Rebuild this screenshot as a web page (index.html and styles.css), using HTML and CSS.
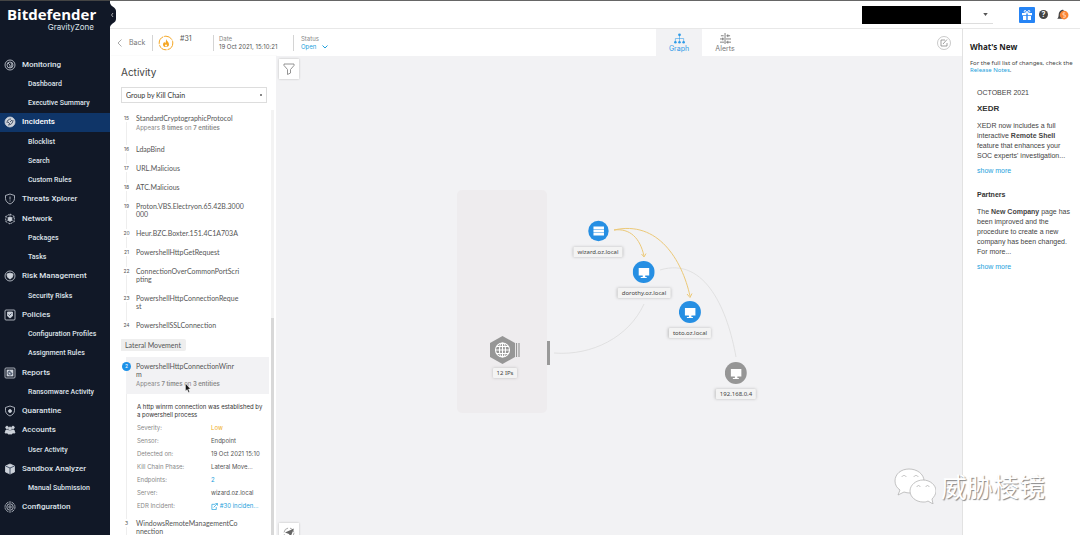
FILE: index.html
```html
<!DOCTYPE html>
<html lang="en">
<head>
<meta charset="utf-8">
<title>Bitdefender GravityZone</title>
<link rel="stylesheet" href="styles.css">
</head>
<body>
<div class="app">
  <aside class="sidebar">
    <div class="brand"><span class="brand-name">Bitdefender</span><span class="brand-sub">GravityZone</span></div>
    <nav class="nav">
      <a href="#" class="top"><svg viewBox="0 0 12 12"><circle cx="6" cy="6" r="5"/><circle cx="6" cy="6" r="3"/><path d="M4 4l2 2v3M7 4l1 2-1 2"/></svg>Monitoring</a>
      <a href="#">Dashboard</a>
      <a href="#">Executive Summary</a>
      <a href="#" class="top active"><svg viewBox="0 0 12 12"><circle cx="6" cy="6" r="5" class="fill"/><path class="dark" d="M3 7c0-3 2-4 4-4M4 9c3 0 5-2 5-5M6 6l2-2M4 6l2 2"/></svg>Incidents</a>
      <a href="#">Blocklist</a>
      <a href="#">Search</a>
      <a href="#">Custom Rules</a>
      <a href="#" class="top"><svg viewBox="0 0 12 12"><path d="M6 1l4.500 1.500v3C10.500 8 8.500 10 6 11 3.500 10 1.500 8 1.500 5.500v-3zM6 3.500v3M6 7.500v1"/></svg>Threats Xplorer</a>
      <a href="#" class="top"><svg viewBox="0 0 12 12"><path d="M6 1v10M1.700 3.500l8.600 5M10.300 3.500l-8.600 5M6 1l4.300 2.500v5L6 11 1.700 8.500v-5z" stroke-dasharray="2 1"/><circle cx="6" cy="6" r="2" class="fill"/></svg>Network</a>
      <a href="#">Packages</a>
      <a href="#">Tasks</a>
      <a href="#" class="top"><svg viewBox="0 0 12 12"><circle cx="6" cy="6" r="5"/><path class="fill" d="M3 4l3-1 3 1c0 3-1 4-3 5-2-1-3-2-3-5z"/></svg>Risk Management</a>
      <a href="#">Security Risks</a>
      <a href="#" class="top"><svg viewBox="0 0 12 12"><rect x="1" y="1" width="10" height="10" rx="1"/><path class="fill" d="M3.500 3h5v4l-2.500 2-2.500-2z"/><path class="dark" d="M4.500 5.500l1 1 2-2"/></svg>Policies</a>
      <a href="#">Configuration Profiles</a>
      <a href="#">Assignment Rules</a>
      <a href="#" class="top"><svg viewBox="0 0 12 12"><rect x="1" y="1" width="10" height="10" rx="1"/><rect x="3" y="3" width="6" height="6" class="fill"/><path class="dark" d="M6 4v2h2A2 2 0 1 1 6 4"/></svg>Reports</a>
      <a href="#">Ransomware Activity</a>
      <a href="#" class="top"><svg viewBox="0 0 12 12"><path d="M6 1l4.500 1.500v3C10.500 8 8.500 10 6 11 3.500 10 1.500 8 1.500 5.500v-3z"/><circle cx="6" cy="6" r="1.500" class="fill"/></svg>Quarantine</a>
      <a href="#" class="top"><svg viewBox="0 0 12 12"><g class="fill"><circle cx="3" cy="3.500" r="1.300"/><circle cx="9" cy="3.500" r="1.300"/><circle cx="6" cy="4.500" r="1.500"/><path d="M1 9l1-3h2l2 1 2-1h2l1 3H8v1H4V9z"/></g></svg>Accounts</a>
      <a href="#">User Activity</a>
      <a href="#" class="top"><svg viewBox="0 0 12 12"><path class="fill" d="M6 1l4.500 2v6L6 11 1.500 9V3z"/><path class="dark" d="M1.500 3L6 5l4.500-2M6 5v6"/></svg>Sandbox Analyzer</a>
      <a href="#">Manual Submission</a>
      <a href="#" class="top"><svg viewBox="0 0 12 12"><circle cx="6" cy="6" r="5" stroke-dasharray="2.500 .6"/><circle cx="6" cy="6" r="3.200"/><circle cx="6" cy="6" r="1.200"/></svg>Configuration</a>
    </nav>
    <button class="collapse" aria-label="Collapse menu"><svg viewBox="0 0 6 24"><path d="M0 0c1 4 6 4 6 8v8c0 4-5 4-6 8z" fill="#111827"/><path d="M3 10L1.500 12 3 14" fill="none" stroke="#ccc" stroke-width=".8"/></svg></button>
  </aside>

  <div class="main">
    <header class="topbar">
      <span class="redacted"></span>
      <button class="account" aria-label="Account menu"><svg viewBox="0 0 6 4"><path d="M0 0h6L3 4z" fill="#555"/></svg></button>
      <button class="gift" aria-label="What's new"><svg viewBox="0 0 12 12"><path fill="#fff" d="M1 4h4.300v2.300H1zM6.700 4H11v2.300H6.700zM2 7h3.300v4H2zM6.700 7H10v4H6.700z"/><path fill="none" stroke="#fff" d="M6 4C3 4 2.500 1.500 4 1.500S6 4 6 4s.5-2.500 2-2.500S9 4 6 4z"/></svg></button>
      <button class="help" aria-label="Help">?</button>
      <button class="bell" aria-label="Notifications"><svg viewBox="0 0 12 12"><path fill="#444" d="M1 10c2-1 1-4 2-6 1-2 3-3 4-2l1 8z"/><circle cx="7.500" cy="6.500" r="4" fill="#fb8532"/><path d="M8.500 4.500h-2v2h2v2h-2" fill="none" stroke="#fff" stroke-width=".6"/></svg></button>
    </header>

    <div class="workspace">
      <div class="incident">
        <div class="toolbar">
          <button class="back"><svg viewBox="0 0 5 8"><path d="M4.500 .5L1 4l3.500 3.500" fill="none" stroke="#aaa"/></svg>Back</button>
          <div class="cell ident"><svg viewBox="0 0 16 16"><circle cx="8" cy="8" r="6.800" fill="none" stroke="#f5a623" stroke-dasharray="9 1"/><path fill="#f5a623" d="M8 4c.5 2 3 3 3 5.300C11 11 10 12 8 12s-3-1-3-2.600C5 8 6 8 6 7c1 .3 1 1 1 1.500C8 7 8 6 8 4z"/><circle cx="8" cy="10.500" r="1" fill="#fff"/></svg><span>#31</span></div>
          <div class="cell date"><span class="muted">Date</span><span>19 Oct 2021, 15:10:21</span></div>
          <div class="cell status"><span class="muted">Status</span><button class="open">Open <svg viewBox="0 0 6 4"><path d="M.5 .5L3 3 5.500 .5" fill="none" stroke="#1d9fdc"/></svg></button></div>
          <div class="tabs">
            <button class="tab on"><svg viewBox="0 0 12 12"><g fill="#2d9be8"><circle cx="6" cy="2" r="1.500"/><circle cx="1.500" cy="10" r="1.400"/><circle cx="6" cy="10" r="1.400"/><circle cx="10.500" cy="10" r="1.400"/></g><path d="M6 2v8M1.500 10V6h9v4" fill="none" stroke="#2d9be8" stroke-width=".6"/></svg>Graph</button>
            <button class="tab"><svg viewBox="0 0 12 12"><path d="M5.500 0v12M1 3h3M7 3h4M0 6.500h4.500M6.500 6.500H12M0 10h4.500M6.500 10H12M8.500 1.500v3M3 5v3M8.500 8.500v3" fill="none" stroke="#777"/></svg>Alerts</button>
          </div>
          <button class="edit" aria-label="Notes"><svg viewBox="0 0 14 14"><circle cx="7" cy="7" r="6.500" fill="none" stroke="#bbb" stroke-width=".8"/><path d="M8 4H4v6h6V7M6 8l4-4.500" fill="none" stroke="#888" stroke-width=".8"/></svg></button>
        </div>

        <div class="body">
          <section class="activity">
            <h2>Activity</h2>
            <select aria-label="Group by"><option>Group by Kill Chain</option></select>
            <div class="scroller">
              <ol class="list">
                <li><i>15</i><div>StandardCryptographicProtocol<p class="sub">Appears <b>8 times</b> on <b>7 entities</b></p></div></li>
                <li><i>16</i><div>LdapBind</div></li>
                <li><i>17</i><div>URL.Malicious</div></li>
                <li><i>18</i><div>ATC.Malicious</div></li>
                <li><i>19</i><div>Proton.VBS.Electryon.65.42B.3000<br>000</div></li>
                <li><i>20</i><div>Heur.BZC.Boxter.151.4C1A703A</div></li>
                <li><i>21</i><div>PowershellHttpGetRequest</div></li>
                <li><i>22</i><div>ConnectionOverCommonPortScri<br>pting</div></li>
                <li><i>23</i><div>PowershellHttpConnectionReque<br>st</div></li>
                <li><i>24</i><div>PowershellSSLConnection</div></li>
              </ol>
              <span class="phase">Lateral Movement</span>
              <ol class="list">
                <li class="selected"><i>2</i><div>PowershellHttpConnectionWinr<br>m<p class="sub">Appears <b>7 times</b> on <b>3 entities</b></p></div>
                  <svg class="cursor" viewBox="0 0 6 10"><path d="M.5 .5v7.500l1.700-1.500L3.500 9.500l1-.5L3.500 6h2z" fill="#111" stroke="#fff" stroke-width=".4"/></svg></li>
              </ol>
              <div class="details">
                <p>A http winrm connection was established by a powershell process</p>
                <dl>
                  <dt>Severity:</dt><dd class="low">Low</dd>
                  <dt>Sensor:</dt><dd>Endpoint</dd>
                  <dt>Detected on:</dt><dd>19 Oct 2021 15:10</dd>
                  <dt>Kill Chain Phase:</dt><dd>Lateral Move...</dd>
                  <dt>Endpoints:</dt><dd><a href="#">2</a></dd>
                  <dt>Server:</dt><dd>wizard.oz.local</dd>
                  <dt>EDR Incident:</dt><dd><a href="#"><svg viewBox="0 0 8 8"><path d="M5 1.500H1v6h5V4.500M3 5l4-4M5 .5h2.500V3" fill="none" stroke="#1d9fdc" stroke-width=".8"/></svg> #30 inciden...</a></dd>
                </dl>
              </div>
              <ol class="list"><li><i>3</i><div>WindowsRemoteManagementCo<br>nnection</div></li></ol>
            </div>
          </section>

          <section class="canvas" aria-label="Graph">
            <button class="tool filter" aria-label="Filter"><svg viewBox="0 0 12 12"><path d="M1 1h10v1.500L7.500 6.500V10L4.500 11.500v-5L1 2.500z" fill="none" stroke="#888" stroke-width=".9"/></svg></button>
            <button class="tool locate" aria-label="Locate"><svg viewBox="0 0 12 12"><circle cx="6" cy="6" r="5" fill="none" stroke="#aaa" stroke-dasharray="6 2"/><path d="M11 1.500L7.500 10 6 7 2 5.500z" fill="#666"/></svg></button>
            <div class="zone"></div>
            <svg class="edges" viewBox="0 0 480 400">
              <g fill="none" stroke="#dcdcdc" stroke-width=".8"><path d="M278 297c38 3 75-16 90-49"/><path d="M384 214c46-14 68 42 76 87"/></g>
              <g fill="none" stroke="#ecc978"><path d="M338 174c16-2 26 8 30 26M365.500 198l2.500 3 2-3.500M338 174c44-10 68 30 76 66M411 238l3 3.500 2-4"/></g>
            </svg>
            <div class="node wizard"><svg viewBox="0 0 22 22"><circle cx="11" cy="11" r="10.200" fill="#268fe3"/><path fill="#fff" d="M6 6.500h10.500V9H6zM6 9.500h10.500V12H6zM6 12.500h10.500V15.500H6z"/></svg><span>wizard.oz.local</span></div>
            <div class="node dorothy"><svg viewBox="0 0 22 22"><circle cx="11" cy="11" r="11" fill="#268fe3"/><path fill="#fff" d="M6 7h10.500v7.500H6zM10 14.500h2.500V16H14v1H8v-1h2z"/></svg><span>dorothy.oz.local</span></div>
            <div class="node toto"><svg viewBox="0 0 22 22"><circle cx="11" cy="11" r="11" fill="#268fe3"/><path fill="#fff" d="M6 7h10.500v7.500H6zM10 14.500h2.500V16H14v1H8v-1h2z"/></svg><span>toto.oz.local</span></div>
            <div class="node host"><svg viewBox="0 0 22 22"><circle cx="11" cy="11" r="11" fill="#969696"/><path fill="#fff" d="M6 7h10.500v7.500H6zM10 14.500h2.500V16H14v1H8v-1h2z"/></svg><span>192.168.0.4</span></div>
            <div class="node ips"><svg viewBox="0 0 32 28"><path fill="#969696" d="M13.500 0L26 7v14l-12.500 7L1 21V7z"/><path stroke="#969696" d="M27.500 7v14M30 7v14" stroke-width="1.200"/><g fill="none" stroke="#fff" stroke-width="1.100"><circle cx="13.500" cy="14" r="7"/><ellipse cx="13.500" cy="14" rx="3" ry="7"/><path d="M13.500 7v14M6.500 14h14M7.500 10.500h12M7.500 17.500h12"/></g></svg><span>12 IPs</span></div>
            <div class="handle"></div>
          </section>
        </div>
      </div>

      <aside class="news">
        <h2>What's New</h2>
        <p class="intro">For the full list of changes, check the <a href="#">Release Notes</a>.</p>
        <article>
          <p>OCTOBER 2021</p>
          <h3>XEDR</h3>
          <p>XEDR now includes a full interactive <b>Remote Shell</b> feature that enhances your SOC experts' investigation...</p>
          <a href="#">show more</a>
        </article>
        <article>
          <h3>Partners</h3>
          <p>The <b>New Company</b> page has been improved and the procedure to create a new company has been changed. For more...</p>
          <a href="#">show more</a>
        </article>
      </aside>
    </div>
  </div>
  <div class="watermark"><svg viewBox="0 0 42 36"><g fill="#fff" stroke="#aaa" stroke-width=".7"><path d="M15 1C7 1 1 6 1 13c0 4 2 7 5 9l-2 5 6-3c2 .7 4 1 6 1 8 0 14-5 14-12S23 1 15 1z"/><path d="M29 12c-7 0-13 5-13 11s6 11 13 11c2 0 3 0 5-1l5 3-1-5c2-2 4-5 4-8 0-6-6-11-13-11z"/><path fill="none" d="M8 9c0-2 4-2 4 0M20 9c0-2 4-2 4 0M23 19c0-2 3-2 3 0M32 19c0-2 3-2 3 0"/></g></svg><span lang="zh">威胁棱镜</span></div>
</div>
</body>
</html>
```
FILE: styles.css
```css
* { box-sizing: border-box; }
body, h2, h3, p, ol, dl, dd { margin: 0; padding: 0; }
body { font: 6px/8px Inter, sans-serif; color: #555; background: #fff; }
button { font: inherit; color: inherit; background: none; border: 0; padding: 0; }
a { color: #1d9fdc; text-decoration: none; }
svg { display: block; flex: none; }
.app { display: flex; height: 100vh; position: relative; overflow: hidden; }

.sidebar { width: 110px; flex: none; background: #111827; color: #dfe3ea; display: flex; flex-direction: column; position: relative; border-top: 1px solid #444; padding-bottom: 18px; }
.brand { height: 54px; padding: 5px 16px 0 7px; display: flex; flex-direction: column; }
.brand-name { font: 700 15px/17px "Open Sans", sans-serif; color: #fff; }
.brand-sub { font-size: 8px; line-height: 9px; align-self: flex-end; }
.nav { flex: 1; display: grid; grid-auto-rows: 1fr; }
.nav a { color: #dfe3ea; font: 500 7px/10px Roboto, sans-serif; padding-left: 28px; display: flex; align-items: center; }
.nav .top { font-size: 8px; padding-left: 4px; gap: 6px; }
.nav .active { background: #0f3568; color: #fff; }
.nav svg { width: 12px; height: 12px; fill: none; stroke: #cdd2da; stroke-width: .8; }
.nav .fill { fill: #cdd2da; }
.nav .dark { fill: none; stroke: #24334c; }
.collapse { position: absolute; left: 110px; top: 2px; z-index: 2; }
.collapse svg { width: 6px; height: 24px; }

.main { flex: 1; min-width: 0; display: flex; flex-direction: column; border-top: 1px solid #666; }
.topbar { height: 28px; flex: none; display: flex; align-items: center; justify-content: flex-end; padding-right: 11px; border-bottom: 1px solid #e8e8e8; }
.redacted { width: 99px; height: 18px; background: #000; }
.account { width: 32px; height: 18px; border-bottom: 1px solid #ddd; display: flex; align-items: center; justify-content: flex-end; padding-right: 5px; margin-right: 26px; }
.account svg { width: 5px; height: 3px; }
.gift { width: 16px; height: 16px; border-radius: 1px; background: #2684f5; display: grid; place-items: center; margin-right: 4px; }
.gift svg { width: 12px; height: 12px; }
.help { width: 9px; height: 9px; border-radius: 50%; background: #444; color: #fff; font-weight: 700; font-size: 7px; line-height: 9px; margin-right: 8px; }
.bell svg { width: 13px; height: 13px; }

.workspace, .body { flex: 1; display: flex; min-height: 0; }
.incident { flex: 1; min-width: 0; display: flex; flex-direction: column; }
.toolbar { height: 27px; flex: none; display: flex; align-items: center; padding-left: 7px; color: #555; }
.back { display: flex; align-items: center; gap: 7px; color: #777; font-size: 7px; width: 35px; }
.back svg { width: 5px; height: 8px; }
.cell { border-left: 1px solid #d4d4d4; height: 16px; display: flex; flex-direction: column; padding-left: 6px; }
.ident { flex-direction: row; gap: 6px; width: 61px; padding-left: 5px; }
.ident svg { width: 16px; height: 16px; }
.ident span { font-size: 7px; }
.date { width: 80px; padding-left: 5px; }
.status { padding-left: 7px; }
.muted { color: #888; }
.open { color: #1d9fdc; display: flex; align-items: center; gap: 6px; }
.open svg { width: 6px; height: 4px; }
.tabs { margin-left: auto; display: flex; align-self: stretch; }
.tab { width: 46px; display: flex; flex-direction: column; align-items: center; justify-content: center; gap: 1px; color: #777; font-size: 7px; }
.tab svg { width: 11px; height: 11px; }
.tab.on { background: #f2f2f4; color: #2d9be8; }
.edit { margin: 0 11px 0 189px; }
.edit svg { width: 14px; height: 14px; }

.activity { width: 166px; flex: none; padding: 10px 2px 0 11px; display: flex; flex-direction: column; box-shadow: 1px 0 1px #e8e8e8; }
.activity h2 { font-weight: 400; font-size: 10px; line-height: 12px; color: #444; }
.activity select { font: 7px/8px Lato, sans-serif; color: #333; appearance: none; height: 16px; width: 146px; margin-top: 9px; padding: 0 4px; border: 1px solid #ddd; border-radius: 0; background: linear-gradient(#888, #888) no-repeat right 4px center / 2px 2px #fff; }
.scroller { flex: 1; min-height: 0; overflow: hidden; margin-top: 7px; padding-top: 4px; border-style: solid; border-image: linear-gradient(#f3f3f3 49%, #d8d8d8 49%) 1; border-width: 0 3px 0 0; }
.list { list-style: none; font: 7px/8px Lato, sans-serif; display: flex; flex-direction: column; gap: 11px; margin-left: 5px; background: linear-gradient(#eee, #eee) no-repeat 0 0 / 1px 100%; }
.list li { display: flex; gap: 5px; position: relative; }
.list i { font: 5px/9px Inter, sans-serif; width: 9px; height: 8px; margin-left: -4px; text-align: center; border-radius: 50%; background: #fff; flex: none; }
.sub { font: 6px/12px Inter, sans-serif; color: #888; }
.sub b { font-weight: 600; }
.phase { display: inline-block; font: 7px/8px Lato, sans-serif; background: #eee; border-radius: 2px; padding: 2px 5px; margin: 10px 0 6px -1px; vertical-align: top; }
.list .selected { background: #f2f2f4; margin-right: 2px; padding: 5px 0 4px; }
.list .selected i { background: #1d91e8; color: #fff; height: 9px; }
.cursor { position: absolute; left: 59px; top: 26px; width: 6px; height: 10px; }
.details { margin-left: 5px; padding: 9px 8px 7px 10px; border-left: 1px solid #eee; }
.details p { color: #333; }
.details dl { display: grid; grid-template-columns: 74px 1fr; line-height: 13px; margin-top: 2px; white-space: nowrap; }
.details dt { color: #888; }
.details .low { color: #efae25; }
.details dd svg { display: inline-block; width: 7px; height: 7px; vertical-align: middle; }

.canvas { flex: 1; position: relative; background: #f2f2f4; overflow: hidden; font: 6px/8px "Noto Sans", sans-serif; color: #444; }
.tool { position: absolute; left: 3px; width: 20px; height: 20px; background: #fff; box-shadow: 0 0 2px #bbb; display: grid; place-items: center; }
.tool svg { width: 12px; height: 12px; }
.filter { top: 3px; }
.locate { bottom: -8px; }
.zone { position: absolute; left: 181px; top: 134px; width: 90px; height: 223px; border-radius: 5px; background: #eeecee; }
.edges { position: absolute; left: 0; top: 0; width: 480px; height: 400px; }
.node { position: absolute; transform: translateX(-50%); display: flex; flex-direction: column; align-items: center; gap: 5px; }
.node svg { width: 22px; height: 22px; }
.node span { background: #f3f3f3; border-radius: 1px; box-shadow: 0 0 3px #bbb; padding: 1px 4px; white-space: nowrap; }
.wizard { left: 322px; top: 164px; }
.dorothy { left: 368px; top: 205px; }
.toto { left: 414px; top: 245px; }
.host { left: 460px; top: 306px; }
.ips { left: 229px; top: 280px; gap: 4px; }
.ips svg { width: 32px; height: 28px; }
.handle { position: absolute; left: 271px; top: 285px; width: 3px; height: 24px; background: #999; }

.news { width: 118px; flex: none; border-left: 1px solid #e2e2e2; padding: 12px 6px 0 7px; font: 7px/10px "Liberation Sans", sans-serif; color: #444; }
.news h2 { font: 700 8px/11px "Noto Sans", sans-serif; color: #222; }
.news .intro { font: 6px/7px "Noto Sans", sans-serif; margin: 8px 0 14px; }
.news article { padding-left: 7px; margin-bottom: 14px; display: flex; flex-direction: column; }
.news h3 { font-size: 7px; color: #333; }
.news article p + h3 { font-size: 8px; margin-top: 6px; }
.news h3 + p { margin: 7px 0 5px; }

.watermark { position: absolute; right: 35px; bottom: 30px; display: flex; align-items: center; gap: 5px; font: 26px/38px "Noto Sans CJK SC", sans-serif; color: #fff; text-shadow: 1px 1px 1px #888; pointer-events: none; }
.watermark svg { width: 42px; height: 36px; }
```
